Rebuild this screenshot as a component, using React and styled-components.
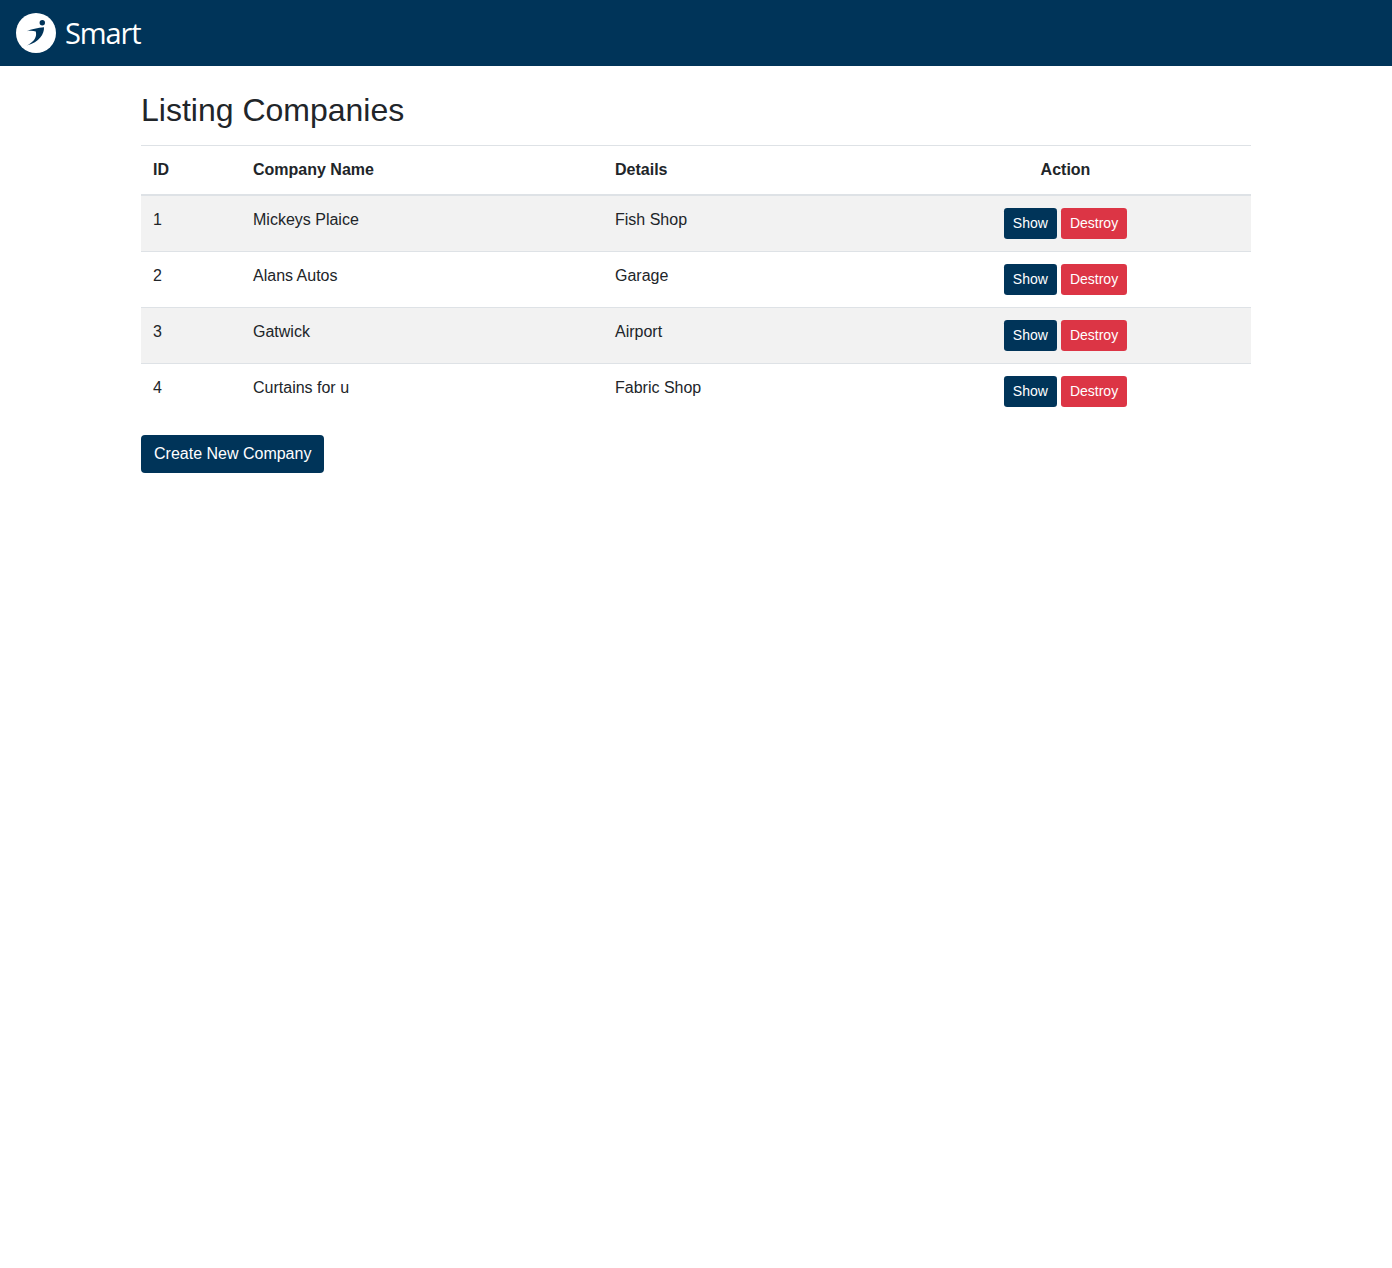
import React from 'react';
import styled, { createGlobalStyle } from 'styled-components';

const GlobalStyle = createGlobalStyle`
  body {
    margin: 0;
    background: #fff;
    color: #212529;
    font-family: 'Liberation Sans', Arial, sans-serif;
    font-size: 16px;
    line-height: 1.5;
  }
`;

const Navbar = styled.header`
  display: flex;
  align-items: center;
  height: 66px;
  padding: 0 16px;
  background: #003459;
`;

const Brand = styled.a`
  display: flex;
  align-items: center;
  gap: 9px;
  color: #fff;
  font-family: 'Open Sans', sans-serif;
  font-size: 29px;
  line-height: 40px;
  letter-spacing: -1.1px;
`;

const LogoSvg = styled.svg`
  display: block;
  width: 40px;
  height: 40px;
`;

const Container = styled.main`
  width: 1110px;
  margin: 0 auto;
`;

const Title = styled.h1`
  margin: 0;
  padding: 24px 0 15px;
  font-size: 32px;
  font-weight: 400;
  line-height: 40px;
`;

const Table = styled.table`
  width: 100%;
  table-layout: fixed;
  border-collapse: collapse;
  margin-bottom: 16px;
`;

const HeadCell = styled.th`
  height: 49px;
  padding: 0 12px;
  border-top: 1px solid #dee2e6;
  border-bottom: 2px solid #dee2e6;
  box-sizing: border-box;
  font-weight: 700;
  text-align: ${p => (p.$center ? 'center' : 'left')};
  width: ${p => p.$width};
`;

const Row = styled.tr`
  background: ${p => (p.$striped ? '#f2f2f2' : 'transparent')};
`;

const Cell = styled.td`
  height: 56px;
  box-sizing: border-box;
  padding: 12px;
  vertical-align: top;
  border-top: ${p => (p.$first ? '0' : '1px solid #dee2e6')};
  text-align: ${p => (p.$center ? 'center' : 'left')};
`;

const Actions = styled.div`
  display: flex;
  justify-content: center;
  gap: 4px;
`;

const Button = styled.a`
  display: inline-block;
  box-sizing: border-box;
  border-radius: ${p => (p.$small ? '3.2px' : '4px')};
  padding: ${p => (p.$small ? '5px 9px' : '7px 13px')};
  background: ${p => (p.$danger ? '#dc3545' : '#003459')};
  color: #fff;
  font-size: ${p => (p.$small ? '14px' : '16px')};
  line-height: ${p => (p.$small ? '21px' : '24px')};
`;

const companies = [
  { id: 1, name: 'Mickeys Plaice', details: 'Fish Shop' },
  { id: 2, name: 'Alans Autos', details: 'Garage' },
  { id: 3, name: 'Gatwick', details: 'Airport' },
  { id: 4, name: 'Curtains for u', details: 'Fabric Shop' },
];

const Logo = () => (
  <LogoSvg viewBox='0 0 40 40' xmlns='http://www.w3.org/2000/svg'>
    <circle cx='20' cy='20' r='20' fill='#fff' />
    <circle cx='26.3' cy='9.7' r='2.7' fill='#003459' />
    <path
      fill='#003459'
      d='M10.8 18.2C15 16.2 22 14.6 28 14.2C28.4 20.5 23.5 29 10.8 32.6C16.5 29.5 21.5 25 19.8 18.4C17 17.6 13.5 17.6 10.8 18.2Z'
    />
  </LogoSvg>
);

const App = () => {
  return (
    <>
      <GlobalStyle />
      <Navbar>
        <Brand>
          <Logo />
          Smart
        </Brand>
      </Navbar>
      <Container>
        <Title>Listing Companies</Title>
        <Table>
          <thead>
            <tr>
              <HeadCell $width='100px'>ID</HeadCell>
              <HeadCell $width='362px'>Company Name</HeadCell>
              <HeadCell $width='277px'>Details</HeadCell>
              <HeadCell $center>Action</HeadCell>
            </tr>
          </thead>
          <tbody>
            {companies.map((company, i) => (
              <Row key={company.id} $striped={i % 2 === 0}>
                <Cell $first={i === 0}>{company.id}</Cell>
                <Cell $first={i === 0}>{company.name}</Cell>
                <Cell $first={i === 0}>{company.details}</Cell>
                <Cell $first={i === 0} $center>
                  <Actions>
                    <Button $small>Show</Button>
                    <Button $small $danger>Destroy</Button>
                  </Actions>
                </Cell>
              </Row>
            ))}
          </tbody>
        </Table>
        <Button>Create New Company</Button>
      </Container>
    </>
  );
};

export default App;
